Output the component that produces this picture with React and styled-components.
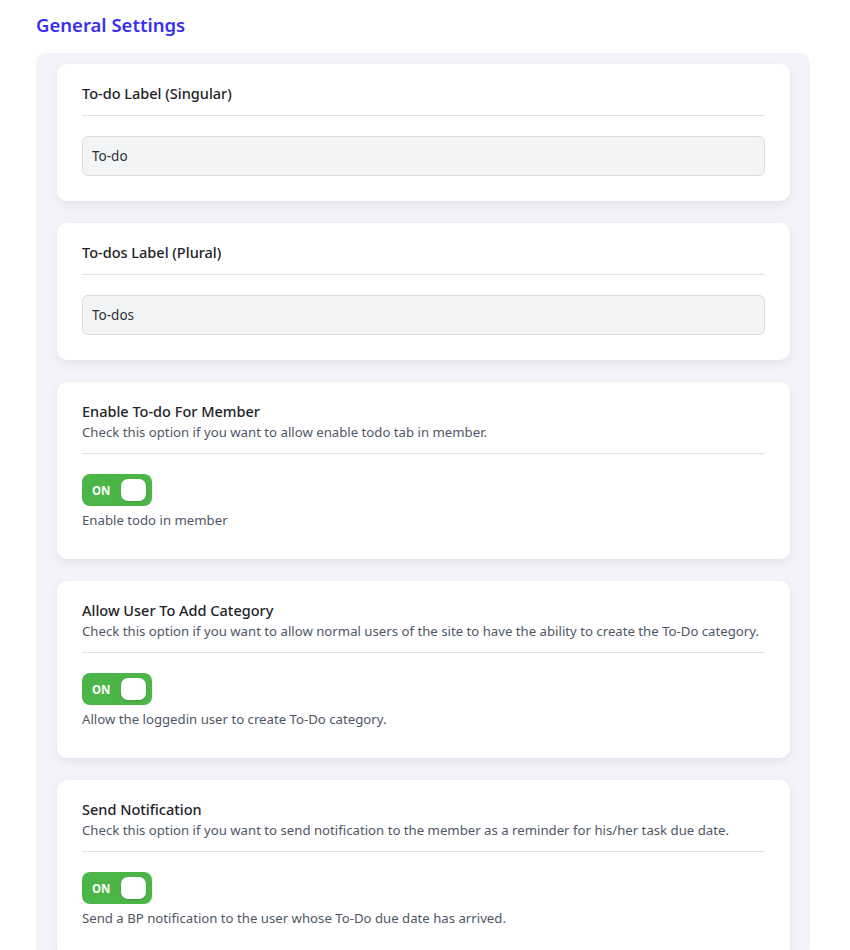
import styled, { createGlobalStyle } from 'styled-components';

const GlobalStyle = createGlobalStyle`
  body {
    margin: 0;
    background: #ffffff;
    font-family: "Noto Sans", "Open Sans", sans-serif;
    color: #1d2327;
  }
`;

const Page = styled.div`
  padding: 11px 40px 0 36px;
`;

const Heading = styled.h1`
  margin: 0 0 14px 0;
  font-size: 18.5px;
  font-weight: 600;
  line-height: 28px;
  color: #3a2ff0;
`;

const Panel = styled.div`
  background: #f3f3fb;
  border-radius: 10px;
  padding: 11px 20px 0 21px;
  display: flex;
  flex-direction: column;
  gap: 22px;
`;

const Card = styled.section`
  background: #ffffff;
  border-radius: 10px;
  box-shadow: 0 4px 10px rgba(60, 60, 120, 0.08);
  padding: 18px 25px 25px 25px;
`;

const Header = styled.div`
  padding-bottom: 11px;
  border-bottom: 1px solid #e2e2ea;
  margin-bottom: 20px;
`;

const Title = styled.h2`
  margin: 0;
  font-size: 14.5px;
  font-weight: 500;
  line-height: 22px;
  color: #1d2327;
`;

const Desc = styled.p`
  margin: 0;
  font-size: 13.2px;
  line-height: 20px;
  color: #4f5766;
`;

const Input = styled.input`
  box-sizing: border-box;
  width: 100%;
  height: 40px;
  padding: 0 9px;
  border: 1px solid #dcdcde;
  border-radius: 6px;
  background: #f3f4f6;
  font-family: inherit;
  font-size: 13.5px;
  color: #2c3338;
  outline: none;
`;

const Toggle = styled.div`
  width: 70px;
  height: 32px;
  box-sizing: border-box;
  border-radius: 8px;
  background: #4cb548;
  display: flex;
  align-items: center;
  justify-content: space-between;
  padding: 0 6px 0 10px;
`;

const ToggleText = styled.span`
  color: #ffffff;
  font-size: 11.5px;
  font-weight: 700;
`;

const Knob = styled.span`
  width: 25px;
  height: 22px;
  border-radius: 7px;
  background: #ffffff;
  box-shadow: 0 1px 2px rgba(0, 0, 0, 0.15);
`;

const Hint = styled.p`
  margin: 4px 0 4px 0;
  font-size: 13.2px;
  line-height: 20px;
  color: #4f5766;
`;

const textCards = [
  { title: 'To-do Label (Singular)', value: 'To-do' },
  { title: 'To-dos Label (Plural)', value: 'To-dos' },
];

const toggleCards = [
  {
    title: 'Enable To-do For Member',
    desc: 'Check this option if you want to allow enable todo tab in member.',
    hint: 'Enable todo in member',
  },
  {
    title: 'Allow User To Add Category',
    desc: 'Check this option if you want to allow normal users of the site to have the ability to create the To-Do category.',
    hint: 'Allow the loggedin user to create To-Do category.',
  },
  {
    title: 'Send Notification',
    desc: 'Check this option if you want to send notification to the member as a reminder for his/her task due date.',
    hint: 'Send a BP notification to the user whose To-Do due date has arrived.',
  },
];

export default function App() {
  return (
    <>
      <GlobalStyle />
      <Page>
        <Heading>General Settings</Heading>
        <Panel>
          {textCards.map((c) => (
            <Card key={c.title}>
              <Header>
                <Title>{c.title}</Title>
              </Header>
              <Input defaultValue={c.value} />
            </Card>
          ))}
          {toggleCards.map((c) => (
            <Card key={c.title}>
              <Header>
                <Title>{c.title}</Title>
                <Desc>{c.desc}</Desc>
              </Header>
              <Toggle>
                <ToggleText>ON</ToggleText>
                <Knob />
              </Toggle>
              <Hint>{c.hint}</Hint>
            </Card>
          ))}
        </Panel>
      </Page>
    </>
  );
}
